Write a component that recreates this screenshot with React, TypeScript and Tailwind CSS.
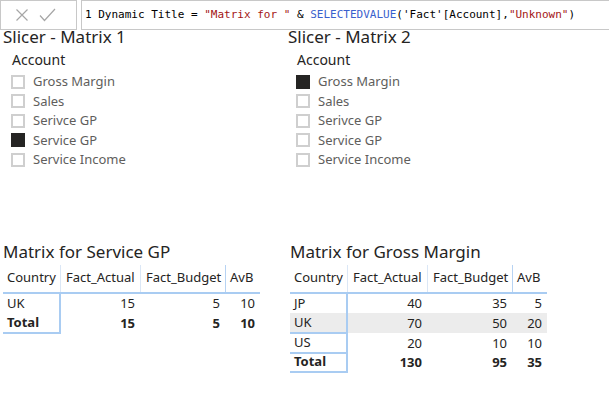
import React from "react";

const ACCOUNTS = ["Gross Margin", "Sales", "Serivce GP", "Service GP", "Service Income"];

function Slicer({ title, selected }: { title: string; selected: string }) {
  return (
    <div className="flex flex-col">
      <div className="h-[16px] text-[17px] leading-[16px] text-[#252423] font-['Noto_Sans',sans-serif]">
        {title}
      </div>
      <div className="mt-[5px] pl-[9px] text-[14px] leading-[20px] text-[#252423]">Account</div>
      <div className="mt-[2px] flex flex-col pl-[8px]">
        {ACCOUNTS.map((a, i) => (
          <div key={i} className="flex h-[19.5px] items-center gap-[8px]">
            {a === selected ? (
              <span className="size-[14px] shrink-0 bg-[#252423]" />
            ) : (
              <span className="size-[14px] shrink-0 border-2 border-[#cfcfcf] bg-white" />
            )}
            <span className="text-[13px] leading-[19px] text-[#605e5c]">{a}</span>
          </div>
        ))}
      </div>
    </div>
  );
}

type Row = { c: string; a: number; b: number; v: number; shade?: boolean };

function Matrix({ title, rows, total }: { title: string; rows: Row[]; total: Row }) {
  const cols = "grid grid-cols-[58px_80px_85px_34px]";
  const num = "pr-[6px] text-right";
  return (
    <div className="flex flex-col">
      <div className="h-[18px] text-[17px] leading-[18px] text-[#252423]">{title}</div>
      <div className="mt-[4px] w-[257px] text-[13px] text-[#252423]">
        {/* header */}
        <div className={`${cols} h-[29px] items-center border-b-2 border-[#a9ccf2]`}>
          <div className="flex h-full items-center border-r border-[#dbe7f6] pl-[4px]">Country</div>
          <div className="flex h-full items-center border-r border-[#dbe7f6] pl-[5px]">Fact_Actual</div>
          <div className="flex h-full items-center border-r border-[#b7d3f3] pl-[5px]">Fact_Budget</div>
          <div className="flex h-full items-center pl-[4px]">AvB</div>
        </div>
        {rows.map((r, i) => (
          <div
            key={r.c}
            className={`${cols} h-[19.5px] items-center leading-[19px] ${r.shade ? "bg-[#ececec]" : ""}`}
          >
            <div
              className={`flex h-full items-center border-r-2 border-[#a9ccf2] pl-[4px] ${
                rows.length > 1 && i > 0 ? "border-b-2" : ""
              }`}
            >
              {r.c}
            </div>
            <div className={num}>{r.a}</div>
            <div className={num}>{r.b}</div>
            <div className="pr-[5px] text-right">{r.v}</div>
          </div>
        ))}
        <div className={`${cols} h-[19.5px] items-center font-bold leading-[19px]`}>
          <div className="flex h-full items-center border-r-2 border-b-2 border-[#a9ccf2] pl-[4px]">
            {total.c}
          </div>
          <div className={num}>{total.a}</div>
          <div className={num}>{total.b}</div>
          <div className="pr-[5px] text-right">{total.v}</div>
        </div>
      </div>
    </div>
  );
}

export default function App() {
  return (
    <div className="h-[408px] w-[609px] overflow-hidden bg-white font-['Noto_Sans',sans-serif]">
      {/* formula bar */}
      <div className="flex h-[30px] gap-[4px]">
        <div className="flex w-[77px] items-center gap-[10px] border border-[#c8c8c8] pl-[14px]">
          <svg width="14" height="14" viewBox="0 0 14 14" fill="none" aria-hidden>
            <path d="M1.5 1.5L12.5 12.5M12.5 1.5L1.5 12.5" stroke="#a6a6a6" strokeWidth="1.2" />
          </svg>
          <svg width="17" height="14" viewBox="0 0 17 14" fill="none" aria-hidden>
            <path d="M1 7.5L5.5 12.5L16 1" stroke="#a6a6a6" strokeWidth="1.2" />
          </svg>
        </div>
        <div className="flex flex-1 items-center border border-r-0 border-[#c8c8c8] pl-[3px] font-['DejaVu_Sans_Mono',monospace] text-[11px] whitespace-pre text-black">
          <span>1 Dynamic Title = </span>
          <span className="text-[#a31515]">"Matrix for "</span>
          <span> &amp; </span>
          <span className="text-[#3a5fcd]">SELECTEDVALUE</span>
          <span>('Fact'[Account],</span>
          <span className="text-[#a31515]">"Unknown"</span>
          <span>)</span>
        </div>
      </div>

      {/* slicers */}
      <div className="mt-[-1px] grid grid-cols-[285px_1fr] pl-[3px]">
        <Slicer title="Slicer - Matrix 1" selected="Service GP" />
        <Slicer title="Slicer - Matrix 2" selected="Gross Margin" />
      </div>

      {/* matrices */}
      <div className="mt-[73px] grid grid-cols-[287px_1fr] pl-[3px]">
        <Matrix
          title="Matrix for Service GP"
          rows={[{ c: "UK", a: 15, b: 5, v: 10 }]}
          total={{ c: "Total", a: 15, b: 5, v: 10 }}
        />
        <Matrix
          title="Matrix for Gross Margin"
          rows={[
            { c: "JP", a: 40, b: 35, v: 5 },
            { c: "UK", a: 70, b: 50, v: 20, shade: true },
            { c: "US", a: 20, b: 10, v: 10 },
          ]}
          total={{ c: "Total", a: 130, b: 95, v: 35 }}
        />
      </div>
    </div>
  );
}
